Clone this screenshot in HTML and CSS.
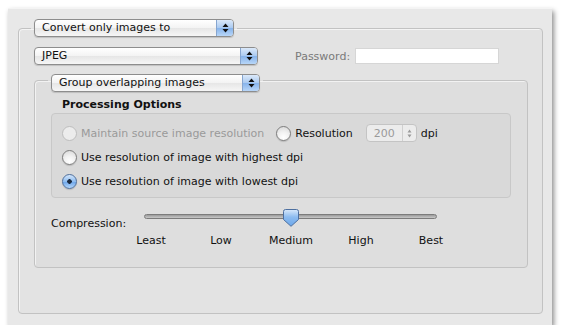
FILE: index.html
```html
<!DOCTYPE html>
<html lang="en">
  <head>
    <meta charset="UTF-8" />
    <title>Image Options</title>
    <link rel="stylesheet" href="styles.css">
  </head>
  <body>
    <div class="window">
      <fieldset class="group outer-group">
        <legend class="group-legend">
          <div class="popup popup-convert">
            <span class="popup-label">Convert only images to</span>
            <span class="popup-arrows">
              <svg width="7" height="10" viewBox="0 0 7 10"><path d="M3.5 0.5 L6.5 4 L0.5 4 Z M0.5 6 L6.5 6 L3.5 9.5 Z" fill="#111"/></svg>
            </span>
          </div>
        </legend>

        <div class="format-row">
          <div class="popup popup-format">
            <span class="popup-label">JPEG</span>
            <span class="popup-arrows">
              <svg width="7" height="10" viewBox="0 0 7 10"><path d="M3.5 0.5 L6.5 4 L0.5 4 Z M0.5 6 L6.5 6 L3.5 9.5 Z" fill="#111"/></svg>
            </span>
          </div>
          <label class="password-label" for="password">Password:</label>
          <input class="password-field" id="password" type="password" disabled />
        </div>

        <fieldset class="group inner-group">
          <legend class="group-legend inner-legend">
            <div class="popup popup-group">
              <span class="popup-label">Group overlapping images</span>
              <span class="popup-arrows">
                <svg width="7" height="10" viewBox="0 0 7 10"><path d="M3.5 0.5 L6.5 4 L0.5 4 Z M0.5 6 L6.5 6 L3.5 9.5 Z" fill="#111"/></svg>
              </span>
            </div>
          </legend>

          <h2 class="section-title">Processing Options</h2>
          <div class="options-box">
            <div class="radio-row">
              <label class="radio disabled"><span class="radio-dot"></span>Maintain source image resolution</label>
              <label class="radio resolution"><span class="radio-dot"></span>Resolution</label>
              <div class="stepper">
                <span class="stepper-value">200</span>
                <span class="stepper-arrows">
                  <svg width="5" height="9" viewBox="0 0 5 9"><path d="M2.5 0.5 L4.5 3.5 L0.5 3.5 Z M0.5 5.5 L4.5 5.5 L2.5 8.5 Z" fill="#9a9a9a"/></svg>
                </span>
              </div>
              <span class="unit">dpi</span>
            </div>
            <div class="radio-row">
              <label class="radio"><span class="radio-dot"></span>Use resolution of image with highest dpi</label>
            </div>
            <div class="radio-row">
              <label class="radio checked"><span class="radio-dot"></span>Use resolution of image with lowest dpi</label>
            </div>
          </div>

          <div class="compression">
            <span class="compression-label">Compression:</span>
            <div class="slider">
              <div class="slider-track">
                <span class="slider-knob" style="left: 50%">
                  <svg width="16" height="18" viewBox="0 0 16 18">
                    <defs>
                      <linearGradient id="knob" x1="0" y1="0" x2="0" y2="1">
                        <stop offset="0" stop-color="#d9e9fb"/>
                        <stop offset="0.45" stop-color="#8dbcf0"/>
                        <stop offset="1" stop-color="#6aa6ea"/>
                      </linearGradient>
                    </defs>
                    <path d="M2.5 0.5 H13.5 Q15.5 0.5 15.5 2.5 V10.5 L8 17.3 L0.5 10.5 V2.5 Q0.5 0.5 2.5 0.5 Z" fill="url(#knob)" stroke="#4d6f9f" stroke-width="1"/>
                  </svg>
                </span>
              </div>
              <div class="slider-ticks">
                <span>Least</span>
                <span>Low</span>
                <span>Medium</span>
                <span>High</span>
                <span>Best</span>
              </div>
            </div>
          </div>
        </fieldset>
      </fieldset>
    </div>
  </body>
</html>
```

FILE: styles.css
```css
* {
  margin: 0;
  padding: 0;
  box-sizing: border-box;
}

body {
  background: #fff;
  font-family: "DejaVu Sans", sans-serif;
  font-size: 11px;
  color: #111;
}

.window {
  margin: 8px 0 0 8px;
  width: 544px;
  height: 317px;
  background: #e8e8e8;
  border-top: 1px solid #f4f4f4;
  box-shadow: 2px 3px 5px rgba(0, 0, 0, 0.45);
  display: flex;
  flex-direction: column;
  padding: 10px 9px 11px 10px;
}

/* group boxes */
.group {
  border: 1px solid #c2c2c2;
  border-radius: 4px;
  background: rgba(0, 0, 0, 0.018);
  box-shadow: inset 1px 1px 0 rgba(255, 255, 255, 0.6);
  min-width: 0;
}

.outer-group {
  flex: 1;
  padding: 0 14px 0 15px;
}

.group-legend {
  padding: 0 3px;
  margin-left: -3px;
}

.inner-legend {
  padding-top: 6px;
}

/* popup buttons */
.popup {
  height: 18px;
  display: flex;
  align-items: stretch;
  border: 1px solid #8d8d8d;
  border-radius: 4px;
  background: linear-gradient(#ffffff, #f3f3f3 50%, #e6e6e6 51%, #f6f6f6);
  box-shadow: 0 1px 1px rgba(0, 0, 0, 0.15);
  overflow: hidden;
}

.popup-label {
  flex: 1;
  padding-left: 7px;
  line-height: 16px;
  white-space: nowrap;
}

.popup-arrows {
  width: 17px;
  display: flex;
  align-items: center;
  justify-content: center;
  border-left: 1px solid #86a5cf;
  background: linear-gradient(#dbe9fa, #a9c9f0 50%, #86b3eb 51%, #b8d6f8);
}

.popup-convert {
  width: 200px;
}

.popup-format {
  width: 224px;
}

.popup-group {
  width: 209px;
}

/* format row */
.format-row {
  display: flex;
  align-items: center;
  margin-top: 10px;
  height: 18px;
}

.password-label {
  margin-left: 37px;
  color: #7a7a7a;
}

.password-field {
  margin-left: 5px;
  width: 144px;
  height: 16px;
  border: 1px solid #d6d6d6;
  background: #fff;
}

.inner-group {
  margin-top: 3px;
  height: 200px;
  padding: 0 16px;
}

.section-title {
  font-size: 11px;
  font-weight: bold;
  margin: 7px 0 0 11px;
  line-height: 12px;
}

.options-box {
  margin-top: 2px;
  height: 85px;
  border: 1px solid #c8c8c8;
  border-radius: 4px;
  background: rgba(0, 0, 0, 0.02);
  padding: 7px 10px 0;
}

.radio-row {
  display: flex;
  align-items: center;
  height: 24px;
}

.radio {
  display: flex;
  align-items: center;
  white-space: nowrap;
}

.radio-dot {
  width: 15px;
  height: 15px;
  margin-right: 4px;
  border-radius: 50%;
  border: 1px solid #7d7d7d;
  background: radial-gradient(circle at 50% 80%, #ffffff, #f1f1f1 45%, #d5d5d5);
  box-shadow: 0 1px 1px rgba(0, 0, 0, 0.15);
}

.radio.disabled {
  color: #9a9a9a;
}

.radio.disabled .radio-dot {
  border-color: #bdbdbd;
  background: #ececec;
  box-shadow: none;
}

.radio.checked .radio-dot {
  border-color: #4f6f9c;
  background: radial-gradient(circle, #1a2a40 0 2px, transparent 2.5px),
    linear-gradient(#d4e6fb, #8ebcef 50%, #6aa4e9 51%, #b4d6fa);
}

.resolution {
  margin-left: 12px;
}

.stepper {
  margin-left: 13px;
  width: 51px;
  height: 18px;
  display: flex;
  align-items: center;
  border: 1px solid #c4c4c4;
  border-radius: 4px;
  background: #ececec;
  color: #9a9a9a;
}

.stepper-value {
  flex: 1;
  padding-left: 7px;
}

.stepper-arrows {
  width: 14px;
  height: 100%;
  display: flex;
  align-items: center;
  justify-content: center;
  border-left: 1px solid #d0d0d0;
}

.unit {
  margin-left: 4px;
}

/* compression slider */
.compression {
  display: flex;
  margin-top: 14px;
}

.compression-label {
  margin-top: 5px;
  width: 93px;
}

.slider {
  width: 293px;
}

.slider-track {
  position: relative;
  height: 5px;
  margin-top: 2px;
  border-radius: 3px;
  border: 1px solid #7c7c7c;
  background: linear-gradient(#9a9a9a, #c9c9c9);
}

.slider-knob {
  position: absolute;
  top: -6px;
  margin-left: -8px;
  line-height: 0;
}

.slider-ticks {
  display: grid;
  grid-template-columns: repeat(5, 70px);
  margin: 15px 0 0 -28px;
}

.slider-ticks span {
  text-align: center;
}
```
